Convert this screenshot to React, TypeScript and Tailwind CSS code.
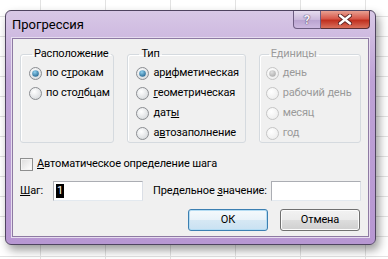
import React from 'react';

const font = "font-['Roboto','Liberation_Sans',sans-serif]";

function Radio({ checked = false, disabled = false }: { checked?: boolean; disabled?: boolean }) {
  const ring = disabled ? '#c4c4c4' : '#8a8d91';
  const dot = disabled ? '#a9a9a9' : '#1d5f8a';
  return (
    <svg width="13" height="13" viewBox="0 0 13 13" className="shrink-0">
      <defs>
        <radialGradient id={`rf${checked}${disabled}`} cx="0.4" cy="0.35" r="0.7">
          <stop offset="0" stopColor="#ffffff" />
          <stop offset="1" stopColor={disabled ? '#ececec' : '#d6d9dc'} />
        </radialGradient>
        <radialGradient id={`rd${disabled}`} cx="0.4" cy="0.3" r="0.8">
          <stop offset="0" stopColor={disabled ? '#e0e0e0' : '#8fd0ef'} />
          <stop offset="1" stopColor={dot} />
        </radialGradient>
      </defs>
      <circle cx="6.5" cy="6.5" r="6" fill={`url(#rf${checked}${disabled})`} stroke={ring} strokeWidth="1" />
      {checked && <circle cx="6.5" cy="6.5" r="3.3" fill={`url(#rd${disabled})`} />}
    </svg>
  );
}

function Option({ checked, disabled, children }: { checked?: boolean; disabled?: boolean; children: React.ReactNode }) {
  return (
    <div className={`flex h-[20px] items-center gap-[4px] whitespace-nowrap ${disabled ? 'text-[#9a9a9a]' : 'text-black'}`}>
      <Radio checked={checked} disabled={disabled} />
      <span>{children}</span>
    </div>
  );
}

function Box({ title, width, pad, children }: { title: string; width: string; pad: string; children: React.ReactNode }) {
  return (
    <fieldset className={`${width} h-[97px] rounded-[3px] border border-[#d5dadf] shadow-[inset_1px_1px_0_#ffffff] ${pad}`}>
      <legend className={`ml-[3px] px-[2px] leading-[16px] ${title === 'Единицы' ? 'text-[#9a9a9a]' : 'text-black'}`}>{title}</legend>
      <div className="pt-[1px]">{children}</div>
    </fieldset>
  );
}

export default function App() {
  return (
    <div
      className={`relative h-[259px] w-[388px] overflow-hidden bg-white bg-[linear-gradient(to_right,#e2e2e2_1px,transparent_1px),linear-gradient(to_bottom,#e2e2e2_1px,transparent_1px)] bg-[size:65px_20px] bg-[position:40px_16px] pl-[5px] pt-[10px] text-[11px] tracking-[-0.15px] ${font}`}
    >
      <div className="flex h-[235px] w-[371px] flex-col rounded-[6px] border border-[#4f4460] bg-[linear-gradient(to_bottom,#d8c8e6,#bea2d6_30%,#b797d2)] shadow-[3px_5px_10px_rgba(0,0,0,0.4)]">
        {/* title bar */}
        <div className="flex h-[27px] items-start pl-[6px]">
          <div className="pt-[5px] text-[13px] leading-[17px] tracking-normal text-black">Прогрессия</div>
          <div className="ml-auto mr-[5px] flex">
            <div className="flex h-[18px] w-[28px] items-center justify-center rounded-bl-[4px] border border-t-0 border-[#6e5d82] bg-[linear-gradient(to_bottom,#e6dcef,#cbb9dc_50%,#b8a2cf_51%,#cdb9e0)]">
              <span className="text-[13px] font-bold leading-none text-[#f4eefa] [text-shadow:0_0_1px_#4a3a5e,0_0_1px_#4a3a5e]">?</span>
            </div>
            <div className="flex h-[18px] w-[49px] items-center justify-center rounded-br-[4px] border border-l-0 border-t-0 border-[#5a2f35] bg-[linear-gradient(to_bottom,#e9a192,#d7584a_45%,#c0301f_55%,#d9705c)]">
              <svg width="14" height="11" viewBox="0 0 14 11">
                <path d="M2 1.5 L12 9.5 M12 1.5 L2 9.5" stroke="#5b2323" strokeWidth="4.2" strokeLinecap="round" />
                <path d="M2 1.5 L12 9.5 M12 1.5 L2 9.5" stroke="#ffffff" strokeWidth="2.4" strokeLinecap="round" />
              </svg>
            </div>
          </div>
        </div>

        {/* client area */}
        <div className="mx-[6px] mb-[7px] flex flex-1 flex-col border border-[#8e7aa3] bg-[#f0f0f0] px-[7px] pt-[7px] shadow-[0_0_0_1px_#e6dcef]">
          <div className="flex gap-[13px]">
            <Box title="Расположение" width="w-[95px]" pad="pl-[8px]">
              <Option checked>
                по с<u>т</u>рокам
              </Option>
              <Option>
                по сто<u>л</u>бцам
              </Option>
            </Box>
            <Box title="Тип" width="w-[119px]" pad="pl-[8px]">
              <Option checked>
                ар<u>и</u>фметическая
              </Option>
              <Option>
                <u>г</u>еометрическая
              </Option>
              <Option>
                дат<u>ы</u>
              </Option>
              <Option>
                а<u>в</u>тозаполнение
              </Option>
            </Box>
            <Box title="Единицы" width="w-[103px]" pad="pl-[6px]">
              <Option checked disabled>
                день
              </Option>
              <Option disabled>рабочий день</Option>
              <Option disabled>месяц</Option>
              <Option disabled>год</Option>
            </Box>
          </div>

          <div className="mt-[14px] flex h-[14px] items-center gap-[4px] whitespace-nowrap">
            <div className="h-[13px] w-[13px] border border-[#8e8f8f] bg-[linear-gradient(135deg,#dcdcdc,#ffffff)] shadow-[inset_0_0_0_1px_#f4f4f4]" />
            <span>
              <u>А</u>втоматическое определение шага
            </span>
          </div>

          <div className="mt-[10px] flex h-[20px] items-center whitespace-nowrap">
            <span className="w-[33px]">
              <u>Ш</u>аг:
            </span>
            <div className="flex h-[20px] w-[90px] items-center border border-[#abadb3] border-b-[#e3e9ef] border-r-[#dbdfe6] bg-white pl-[2px]">
              <span className="bg-black px-[1px] leading-[14px] text-white">1</span>
            </div>
            <span className="ml-[10px]">
              Предельное <u>з</u>начение:
            </span>
            <div className="ml-auto h-[20px] w-[90px] border border-[#abadb3] border-b-[#e3e9ef] border-r-[#dbdfe6] bg-white" />
          </div>

          <div className="mt-[8px] flex justify-end gap-[12px] pr-[1px]">
            <button className="h-[22px] w-[80px] rounded-[3px] border border-[#3c7fb1] bg-[linear-gradient(to_bottom,#f4f9fc,#e8f2f9_50%,#d6e8f4_51%,#c9e1f2)] shadow-[inset_0_0_0_1px_#b4dcf3] text-black">
              ОК
            </button>
            <button className="h-[22px] w-[80px] rounded-[3px] border border-[#707070] bg-[linear-gradient(to_bottom,#f2f2f2,#ebebeb_50%,#dddddd_51%,#cfcfcf)] shadow-[inset_0_0_0_1px_#fcfcfc] text-black">
              Отмена
            </button>
          </div>
        </div>
      </div>
    </div>
  );
}
